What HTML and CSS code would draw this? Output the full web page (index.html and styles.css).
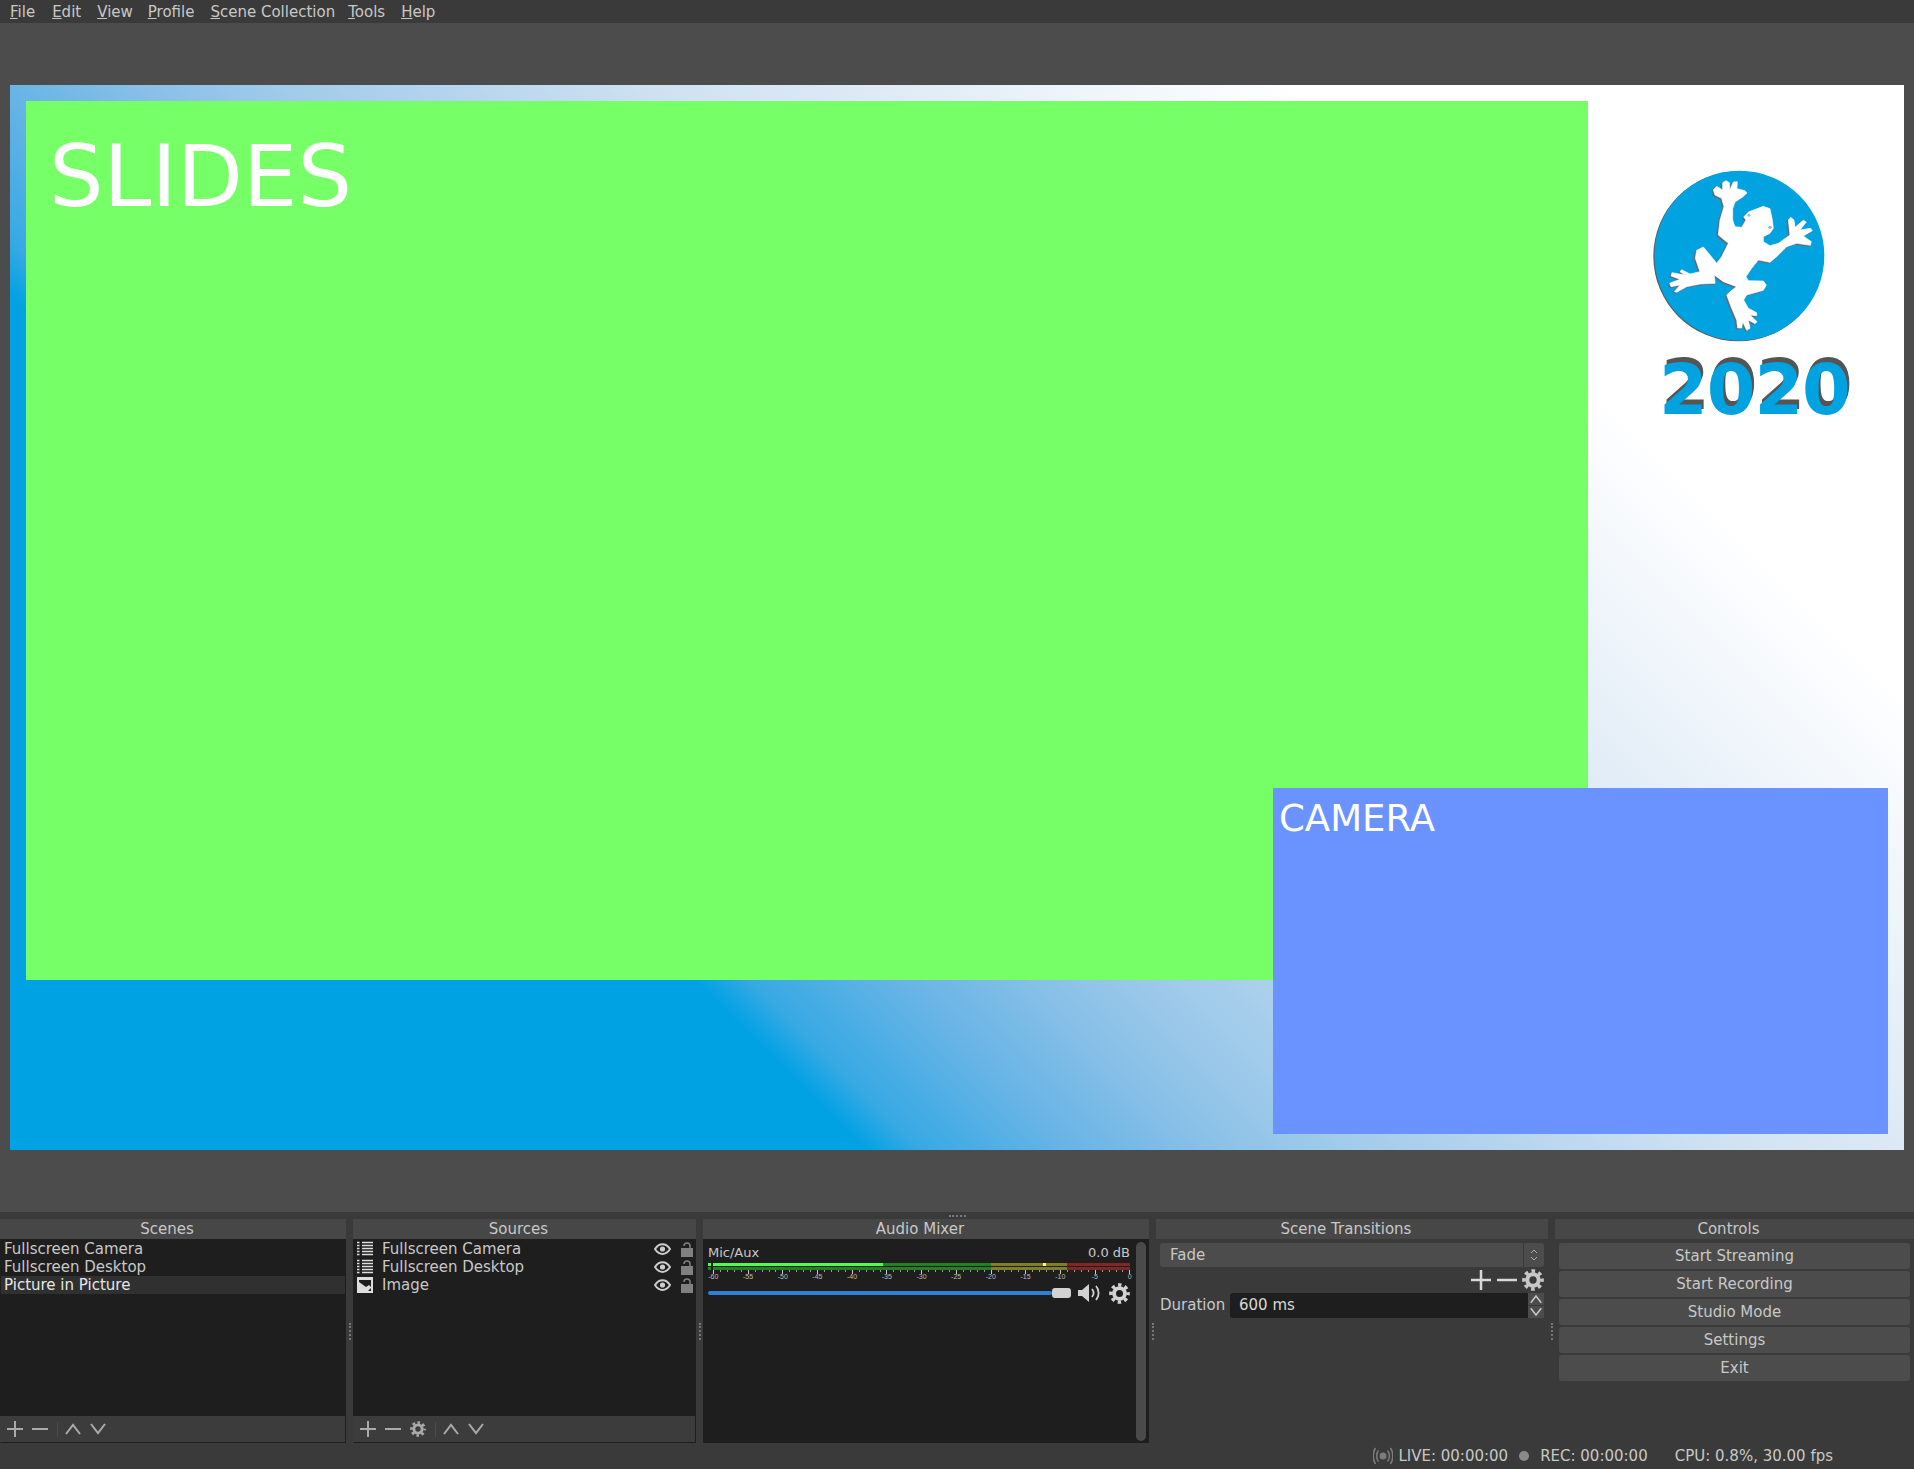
FILE: index.html
```html
<!DOCTYPE html>
<html lang="en">
<head>
  <meta charset="UTF-8">
  <title>OBS</title>
  <link rel="stylesheet" href="styles.css">
</head>
<body>

  <svg class="defs" width="0" height="0">
    <symbol id="plus" viewBox="0 0 16 16"><path d="M8 0v16M0 8h16" fill="none" stroke="currentColor" stroke-width="2"/></symbol>
    <symbol id="minus" viewBox="0 0 16 16"><path d="M0 8h16" fill="none" stroke="currentColor" stroke-width="2"/></symbol>
    <symbol id="up" viewBox="0 0 16 16"><path d="M1 13l7-9 7 9" fill="none" stroke="currentColor" stroke-width="2"/></symbol>
    <symbol id="down" viewBox="0 0 16 16"><path d="M1 3l7 9 7-9" fill="none" stroke="currentColor" stroke-width="2"/></symbol>
    <symbol id="gear" viewBox="0 0 24 24">
      <circle cx="12" cy="12" r="6.2" fill="none" stroke="currentColor" stroke-width="4.4"/>
      <circle cx="12" cy="12" r="9.8" fill="none" stroke="currentColor" stroke-width="4" stroke-dasharray="3.9 3.797" stroke-dashoffset="1.95"/>
    </symbol>
    <symbol id="list" viewBox="0 0 16 15">
      <path d="M0 1h2.500M0 4h2.500M0 7h2.500M0 10h2.500M0 13h2.500" stroke="#ddd" stroke-width="1.600"/>
      <path d="M5 1h11M5 4h11M5 7h11M5 10h11M5 13h11" stroke="#ddd" stroke-width="1.600"/>
    </symbol>
    <symbol id="picture" viewBox="0 0 16 16">
      <rect width="16" height="16" fill="#ddd"/>
      <path d="M2 3h12v7l-2-2-3 2-7-5z" fill="#1e1e1e"/>
      <path d="M14 11v3h-3z" fill="#1e1e1e"/>
    </symbol>
    <symbol id="eye" viewBox="0 0 17 12">
      <path d="M1 6c4-6.500 11-6.500 15 0c-4 6.500-11 6.500-15 0z" fill="none" stroke="#ccc" stroke-width="2"/>
      <circle cx="8.500" cy="6" r="2.600" fill="#ccc"/>
    </symbol>
    <symbol id="lock" viewBox="0 0 12 15">
      <rect y="6" width="12" height="9" fill="#808080"/>
      <path d="M3 4c0-4 6-4 6 0v2" fill="none" stroke="#808080" stroke-width="1.500"/>
    </symbol>
  </svg>

  <div class="menubar">
    <span class="menu-item"><u>F</u>ile</span>
    <span class="menu-item"><u>E</u>dit</span>
    <span class="menu-item"><u>V</u>iew</span>
    <span class="menu-item"><u>P</u>rofile</span>
    <span class="menu-item"><u>S</u>cene Collection</span>
    <span class="menu-item"><u>T</u>ools</span>
    <span class="menu-item"><u>H</u>elp</span>
  </div>

  <div class="preview">
    <div class="canvas">
      <div class="slides">SLIDES</div>
      <svg class="logo" viewBox="0 0 912 900">
        <circle cx="415" cy="349" r="255" fill="#5a5a5a"/>
        <circle cx="418" cy="347" r="255" fill="#00a2e0"/>
        <path class="frog" fill="#fff" stroke="#fff" stroke-width="2" stroke-linejoin="round" d="M340 150 350 139 368 150 368 128 378 122 388 128 389 150 400 126 412 125 411 146 435 152 441 159 428 171 405 186 398 206 398 240 405 260 425 262 438 240 431 231 445 216 490 199 510 206 517 240 520 265 510 280 490 290 490 305 510 317 535 310 570 285 565 240 572 232 582 240 585 262 610 241 619 246 600 270 632 265 637 272 610 288 634 305 631 316 590 310 560 320 530 350 510 367 475 360 455 385 438 410 445 422 490 423 499 435 490 451 440 465 431 480 445 505 470 518 470 527 450 525 471 545 465 551 445 540 450 565 440 571 428 545 425 564 413 564 410 540 395 505 380 465 395 451 410 440 370 425 343 405 345 430 300 432 260 440 230 457 223 455 240 435 213 440 209 430 240 418 213 408 216 398 255 405 240 395 245 389 270 402 300 395 286 355 290 331 310 321 330 345 350 370 365 350 385 310 355 285 360 240 372 200 365 175 345 165z"/>
        <circle cx="447" cy="226" r="4" fill="#6fc3ec"/>
        <circle cx="510" cy="262" r="5" fill="#6fc3ec"/>
      </svg>
      <div class="year">2020</div>
      <div class="camera">CAMERA</div>
    </div>
  </div>

  <div class="dock-area">
    <div class="dock-handle"></div>
    <div class="docks">

      <section class="dock dock-scenes">
        <div class="dock-title">Scenes</div>
        <div class="list">
          <div class="row">Fullscreen Camera</div>
          <div class="row">Fullscreen Desktop</div>
          <div class="row row-selected">Picture in Picture</div>
        </div>
        <div class="toolbar">
          <svg class="tool"><use href="#plus"/></svg>
          <svg class="tool"><use href="#minus"/></svg>
          <span class="tool-sep"></span>
          <svg class="tool"><use href="#up"/></svg>
          <svg class="tool"><use href="#down"/></svg>
        </div>
      </section>

      <div class="splitter"></div>

      <section class="dock dock-sources">
        <div class="dock-title">Sources</div>
        <div class="list">
          <div class="row source-row">
            <svg class="source-icon"><use href="#list"/></svg>
            <span class="source-name">Fullscreen Camera</span>
            <svg class="eye"><use href="#eye"/></svg>
            <svg class="lock"><use href="#lock"/></svg>
          </div>
          <div class="row source-row">
            <svg class="source-icon"><use href="#list"/></svg>
            <span class="source-name">Fullscreen Desktop</span>
            <svg class="eye"><use href="#eye"/></svg>
            <svg class="lock"><use href="#lock"/></svg>
          </div>
          <div class="row source-row">
            <svg class="source-icon"><use href="#picture"/></svg>
            <span class="source-name">Image</span>
            <svg class="eye"><use href="#eye"/></svg>
            <svg class="lock"><use href="#lock"/></svg>
          </div>
        </div>
        <div class="toolbar">
          <svg class="tool"><use href="#plus"/></svg>
          <svg class="tool"><use href="#minus"/></svg>
          <svg class="tool"><use href="#gear"/></svg>
          <span class="tool-sep"></span>
          <svg class="tool"><use href="#up"/></svg>
          <svg class="tool"><use href="#down"/></svg>
        </div>
      </section>

      <div class="splitter"></div>

      <section class="dock dock-audio">
        <div class="dock-title">Audio Mixer</div>
        <div class="mixer">
          <div class="strip">
            <div class="strip-head"><span>Mic/Aux</span><span>0.0 dB</span></div>
            <div class="meter">
              <div class="channel">
                <span class="seg seg-clip"></span>
                <span class="seg seg-level"></span>
                <span class="seg seg-green-rest"></span>
                <span class="seg seg-yellow"></span>
                <span class="seg seg-red"></span>
              </div>
              <div class="channel">
                <span class="seg seg-clip-dim"></span>
                <span class="seg seg-green-full"></span>
                <span class="seg seg-yellow"></span>
                <span class="seg seg-red"></span>
              </div>
              <span class="peak"></span>
            </div>
            <div class="ticks"></div>
            <div class="tick-labels">
              <span>-60</span><span>-55</span><span>-50</span><span>-45</span><span>-40</span><span>-35</span><span>-30</span><span>-25</span><span>-20</span><span>-15</span><span>-10</span><span>-5</span><span>0</span>
            </div>
            <div class="fader-row">
              <div class="fader-track"></div>
              <div class="fader-handle"></div>
              <svg class="speaker" viewBox="0 0 22 18">
                <path d="M0 6h4l7-6v18l-7-6H0z" fill="#d2d2d2"/>
                <path d="M14 5c2 2.500 2 5.500 0 8M18 2c3.500 4 3.500 10 0 14" fill="none" stroke="#d2d2d2" stroke-width="1.800"/>
              </svg>
              <svg class="mixer-gear"><use href="#gear"/></svg>
            </div>
          </div>
          <div class="scrollbar"></div>
        </div>
      </section>

      <div class="splitter"></div>

      <section class="dock dock-transitions">
        <div class="dock-title">Scene Transitions</div>
        <div class="transitions">
          <div class="combo">
            <span class="combo-text">Fade</span>
            <span class="combo-arrows">
              <svg width="8" height="16" viewBox="0 0 8 16"><path d="M1 6l3-3 3 3M1 10l3 3 3-3" fill="none" stroke="#aaa"/></svg>
            </span>
          </div>
          <div class="transition-tools">
            <svg class="big-tool"><use href="#plus"/></svg>
            <svg class="big-tool"><use href="#minus"/></svg>
            <svg class="big-tool gear-tool"><use href="#gear"/></svg>
          </div>
          <div class="duration">
            <span class="duration-label">Duration</span>
            <span class="spin-input">600 ms</span>
            <span class="spin-buttons">
              <span class="spin-button"><svg><use href="#up"/></svg></span>
              <span class="spin-button"><svg><use href="#down"/></svg></span>
            </span>
          </div>
        </div>
      </section>

      <div class="splitter"></div>

      <section class="dock dock-controls">
        <div class="dock-title">Controls</div>
        <div class="controls">
          <div class="control-button">Start Streaming</div>
          <div class="control-button">Start Recording</div>
          <div class="control-button">Studio Mode</div>
          <div class="control-button">Settings</div>
          <div class="control-button">Exit</div>
        </div>
      </section>

    </div>

    <div class="statusbar">
      <svg class="radio" viewBox="0 0 20 18">
        <circle cx="10" cy="9" r="3.500" fill="#7c7c7c"/>
        <path d="M5.500 3.500c-2.500 3-2.500 8 0 11M14.500 3.500c2.500 3 2.500 8 0 11M2.500 1c-3 4.500-3 11.500 0 16M17.500 1c3 4.500 3 11.500 0 16" fill="none" stroke="#7c7c7c" stroke-width="1.500"/>
      </svg>
      <span class="status-live">LIVE: 00:00:00</span>
      <span class="status-dot"></span>
      <span class="status-rec">REC: 00:00:00</span>
      <span class="status-cpu">CPU: 0.8%, 30.00 fps</span>
    </div>
  </div>

</body>
</html>
```

FILE: styles.css
```css
* {
  box-sizing: border-box;
}
html, body {
  margin: 0;
  height: 1469px;
  overflow: hidden;
}
body {
  display: flex;
  flex-direction: column;
  font-family: "DejaVu Sans", sans-serif;
  font-size: 15px;
  color: #c8c8c8;
  background: #3a3a3a;
}
.defs {
  position: absolute;
}

/* menu */
.menubar {
  display: flex;
  flex: none;
  height: 23px;
  padding-left: 2px;
  line-height: 25px;
  background: #3a3a3a;
}
.menu-item {
  padding: 0 8px;
}
.menu-item:nth-child(1) {
  padding-right: 9px;
}
.menu-item:nth-child(3) {
  padding-right: 7px;
}
.menu-item:nth-child(5) {
  padding-right: 5px;
}

/* preview */
.preview {
  flex: 1;
  padding: 62px 0 0 10px;
  background: #4c4c4c;
}
.canvas {
  position: relative;
  width: 1894px;
  height: 1065px;
  overflow: hidden;
  background: linear-gradient(45deg,
    #00a2e4 604px, #38a9e4 645px, #66b4e5 745px, #8bc1e8 856px,
    #a0cbea 942px, #cfe2f3 1215px, #dce9f5 1340px, #ffffff 1660px);
}
.slides {
  position: absolute;
  left: 16px;
  top: 16px;
  width: 1562px;
  height: 879px;
  padding: 32px 0 0 23px;
  font-size: 86px;
  line-height: 86px;
  color: #fff;
  background: #76ff66;
}
.camera {
  position: absolute;
  left: 1263px;
  top: 703px;
  width: 615px;
  height: 346px;
  padding: 12px 0 0 6px;
  font-size: 37px;
  line-height: 37px;
  color: #fff;
  background: #6a93ff;
}
.logo {
  position: absolute;
  left: 1590px;
  top: 55px;
  width: 304px;
  height: 300px;
}
.frog {
  filter: drop-shadow(-4px 3px 0 #666);
}
.year {
  position: absolute;
  left: 1649px;
  top: 270px;
  font-size: 70px;
  font-weight: bold;
  line-height: 70px;
  letter-spacing: -1px;
  color: #00a2e0;
  text-shadow: 2px -5px 0 #555;
}

/* docks */
.dock-area {
  flex: none;
  height: 257px;
  background: #3a3a3a;
}
.dock-handle {
  width: 17px;
  height: 2px;
  margin: 3px auto 2px;
  border-top: 2px dotted #7a7a7a;
}
.docks {
  display: flex;
  height: 224px;
}
.dock {
  display: flex;
  flex-direction: column;
}
.dock-scenes {
  width: 346px;
}
.dock-sources {
  width: 343px;
}
.dock-audio {
  width: 446px;
}
.dock-transitions {
  width: 392px;
}
.dock-controls {
  width: 359px;
}
.dock-title {
  height: 20px;
  padding-right: 12px;
  line-height: 20px;
  text-align: center;
  background: #474747;
}
.splitter {
  display: flex;
  align-items: center;
  justify-content: center;
  width: 7px;
}
.splitter::before {
  content: "";
  height: 17px;
  border-left: 2px dotted #777;
}

/* lists */
.list {
  flex: 1;
  padding-top: 1px;
  background: #1e1e1e;
}
.row {
  height: 18px;
  padding-left: 4px;
  line-height: 19px;
}
.row-selected {
  margin: 0 1px;
  padding-left: 3px;
  color: #e6e6e6;
  background: #303030;
}
.source-row {
  display: flex;
  align-items: center;
  line-height: 18px;
}
.source-icon {
  width: 16px;
  height: 16px;
  margin-right: 9px;
}
.source-name {
  flex: 1;
}
.eye {
  width: 17px;
  height: 12px;
  margin-right: 10px;
}
.lock {
  width: 12px;
  height: 15px;
  margin-right: 3px;
}
.toolbar {
  display: flex;
  align-items: center;
  gap: 9px;
  height: 27px;
  padding-left: 6px;
  color: #aaa;
  background: #3c3c3c;
  border-bottom: 1px solid #1e1e1e;
  border-right: 1px solid #1e1e1e;
  border-left: 1px solid #3c3c3c;
}
.tool {
  width: 16px;
  height: 16px;
}
.tool-sep {
  width: 1px;
  height: 15px;
  margin-right: -2px;
  background: #4a4a4a;
}

/* audio */
.mixer {
  display: flex;
  flex: 1;
  background: #1e1e1e;
}
.strip {
  width: 427px;
  padding: 6px 0 0 5px;
}
.strip-head {
  display: flex;
  justify-content: space-between;
  height: 15px;
  margin-bottom: 3px;
  font-size: 13px;
  line-height: 16px;
}
.meter {
  position: relative;
  display: flex;
  flex-direction: column;
  gap: 1px;
  width: 422px;
}
.channel {
  display: flex;
  height: 3px;
}
.seg-clip {
  width: 3px;
  margin-right: 2px;
  background: #4cff4c;
}
.seg-clip-dim {
  width: 3px;
  margin-right: 2px;
  background: #267f26;
}
.seg-level {
  width: 170px;
  background: #4cff4c;
}
.seg-green-rest {
  width: 108px;
  background: #267f26;
}
.seg-green-full {
  width: 278px;
  background: #267f26;
}
.seg-yellow {
  width: 76px;
  background: #7f7f26;
}
.seg-red {
  width: 63px;
  background: #7f2626;
}
.peak {
  position: absolute;
  left: 335px;
  top: 0;
  width: 3px;
  height: 3px;
  background: #ffff4c;
}
.ticks {
  width: 417px;
  height: 4px;
  margin-left: 5px;
  background:
    repeating-linear-gradient(90deg, #ccc 0 1px, transparent 1px 34.7px) 0 0 / 100% 4px no-repeat,
    repeating-linear-gradient(90deg, #999 0 1px, transparent 1px 6.94px) 0 0 / 100% 2px no-repeat;
}
.tick-labels {
  display: flex;
  width: 452px;
  height: 6px;
  margin-left: -12px;
  font-family: "Liberation Sans", sans-serif;
  font-size: 7px;
  line-height: 6px;
  color: #bbb;
}
.tick-labels span {
  width: 34.7px;
  flex: none;
  text-align: center;
}
.fader-row {
  display: flex;
  align-items: center;
  height: 20px;
  margin-top: 3px;
}
.fader-track {
  width: 344px;
  height: 4px;
  border-radius: 2px;
  background: #2f7fd6;
}
.fader-handle {
  width: 19px;
  height: 10px;
  border-radius: 3px;
  background: #d2d2d2;
}
.speaker {
  width: 22px;
  height: 18px;
  margin-left: 7px;
}
.mixer-gear {
  width: 21px;
  height: 21px;
  margin-left: 9px;
  color: #d2d2d2;
}
.scrollbar {
  width: 10px;
  margin: 3px 0 2px 6px;
  border-radius: 5px;
  background: #4a4a4a;
}

/* transitions */
.transitions {
  flex: 1;
  padding: 4px 4px 0;
}
.combo {
  display: flex;
  height: 24px;
  line-height: 25px;
  border-radius: 3px;
  background: #4c4c4c;
}
.combo-text {
  flex: 1;
  padding-left: 10px;
}
.combo-arrows {
  display: flex;
  align-items: center;
  justify-content: center;
  width: 21px;
  border-left: 1px solid #3a3a3a;
}
.transition-tools {
  display: flex;
  justify-content: flex-end;
  align-items: center;
  gap: 6px;
  height: 20px;
  margin-top: 3px;
  color: #d8d8d8;
}
.big-tool {
  width: 20px;
  height: 20px;
}
.gear-tool {
  width: 22px;
  height: 22px;
  margin-left: -1px;
  color: #c8c8c8;
}
.duration {
  display: flex;
  align-items: center;
  height: 25px;
  margin-top: 3px;
}
.duration-label {
  width: 70px;
  margin-top: -1px;
}
.spin-input {
  width: 298px;
  height: 25px;
  padding-left: 9px;
  line-height: 25px;
  color: #d8d8d8;
  border-radius: 3px 0 0 3px;
  background: #1e1e1e;
}
.spin-buttons {
  display: flex;
  flex-direction: column;
  gap: 1px;
  width: 16px;
}
.spin-button {
  display: flex;
  justify-content: center;
  align-items: center;
  height: 12px;
  color: #c8c8c8;
  background: #4c4c4c;
}
.spin-button svg {
  width: 12px;
  height: 12px;
}

/* controls */
.controls {
  display: flex;
  flex-direction: column;
  gap: 2px;
  padding: 4px;
}
.control-button {
  height: 26px;
  line-height: 27px;
  text-align: center;
  border-radius: 3px;
  background: #4c4c4c;
}

/* status */
.statusbar {
  display: flex;
  align-items: center;
  justify-content: flex-end;
  height: 26px;
  padding-right: 81px;
}
.radio {
  width: 20px;
  height: 18px;
  margin-right: 5px;
}
.status-dot {
  width: 10px;
  height: 10px;
  margin: 0 11px 0 11px;
  border-radius: 50%;
  background: #8a8a8a;
}
.status-cpu {
  margin-left: 27px;
}
```
